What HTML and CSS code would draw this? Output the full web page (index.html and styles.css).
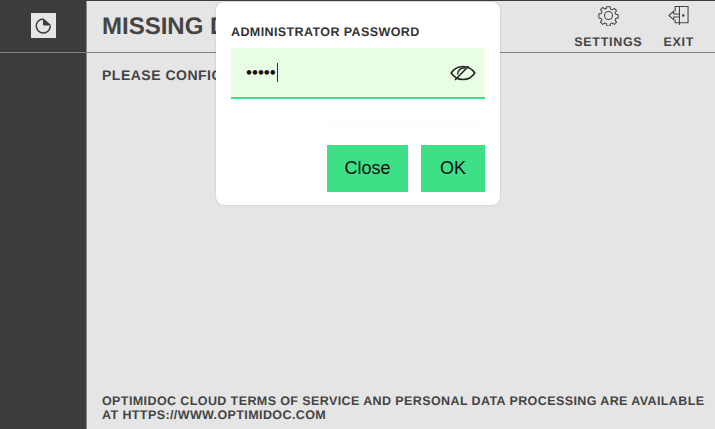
FILE: index.html
```html
<!DOCTYPE html>
<html lang="en">
<head>
  <meta charset="UTF-8" />
  <title>Optimidoc</title>
  <link rel="stylesheet" href="styles.css">
</head>
<body>
  <div class="app">
    <aside class="sidebar">
      <div class="logo-row">
        <div class="logo">
          <svg width="19" height="19" viewBox="0 0 19 19" fill="none" stroke="#3c3c3c" stroke-width="1.500">
            <path d="M9.300 3a7 7 0 1 0 7 7" />
            <path d="M9.500 3l7 6H9.500z" fill="#3c3c3c" stroke-width="1" />
          </svg>
        </div>
      </div>
    </aside>
    <main class="main">
      <header class="topbar">
        <h1>MISSING DATA</h1>
        <div class="actions">
          <div class="action action-settings">
            <svg width="21" height="21" viewBox="0 0 22 22" fill="none" stroke="#444" stroke-width="1.100">
              <circle cx="11" cy="11" r="4.200" />
              <path d="M9.300 1.800h3.400l.5 2.600 1.700.7 2.200-1.500 2.300 2.400-1.500 2.100.7 1.700 2.500.5v3.300l-2.500.5-.7 1.700 1.500 2.100-2.300 2.400-2.200-1.500-1.700.7-.5 2.600H9.300l-.5-2.600-1.700-.7-2.200 1.500-2.300-2.400 1.500-2.100-.7-1.700-2.500-.5V9.300l2.500-.5.7-1.700-1.500-2.100 2.300-2.400 2.200 1.500 1.700-.7z" stroke-linejoin="round" />
            </svg>
            <span>SETTINGS</span>
          </div>
          <div class="action action-exit">
            <svg width="21" height="21" viewBox="0 0 22 22" fill="none" stroke="#444" stroke-width="1.100">
              <path d="M7.500 6.500v-5H21v17h-9" />
              <path d="M7.500 15.500v3H12" />
              <path d="M12 1.500V21" />
              <circle cx="16" cy="11" r=".8" fill="#444" />
              <path d="M1 11l5-4.500v3h6v3H6v3z" />
            </svg>
            <span>EXIT</span>
          </div>
        </div>
      </header>
      <section class="content">
        <p class="message">PLEASE CONFIGURE THE APPLICATION</p>
        <p class="terms">OPTIMIDOC CLOUD TERMS OF SERVICE AND PERSONAL DATA PROCESSING ARE AVAILABLE AT HTTPS://WWW.OPTIMIDOC.COM</p>
      </section>
    </main>
  </div>

  <div class="dialog">
    <label class="dialog-label">ADMINISTRATOR PASSWORD</label>
    <div class="password-field">
      <span class="dots">•••••</span><span class="caret"></span>
      <svg class="eye" width="26" height="22" viewBox="0 0 26 22" fill="none" stroke="#222" stroke-width="1.500">
        <path d="M1.200 11C4 6.800 8 4.500 13 4.500S22 6.800 24.800 11C22 15.200 18 17.500 13 17.500S4 15.200 1.200 11z" />
        <path d="M7.500 12.500a6.500 6.500 0 0 1 7.500-6.500" />
        <path d="M5 18L18.500 4.200" />
      </svg>
    </div>
    <div class="hint"></div>
    <div class="buttons">
      <button class="btn btn-close" type="button">Close</button>
      <button class="btn btn-ok" type="button">OK</button>
    </div>
  </div>
</body>
</html>
```

FILE: styles.css
```css
html, body {
  margin: 0;
  height: 100%;
  overflow: hidden;
}
body {
  font-family: "Liberation Sans", Arial, sans-serif;
  background: #e5e5e5;
  color: #444;
  text-rendering: geometricPrecision;
}
.app {
  display: flex;
  height: 429px;
  box-sizing: border-box;
  border-top: 1px solid #3c3c3c;
}
.sidebar {
  width: 86px;
  background: #3c3c3c;
  border-right: 1px solid #8a8a8a;
}
.logo-row {
  height: 52px;
  box-sizing: border-box;
  padding-bottom: 3px;
  border-bottom: 1px solid #808080;
  display: flex;
  align-items: center;
  justify-content: center;
}
.logo {
  width: 25px;
  height: 25px;
  background: #e5e5e5;
  display: flex;
  align-items: center;
  justify-content: center;
}
.main {
  flex: 1;
  display: flex;
  flex-direction: column;
}
.topbar {
  height: 52px;
  box-sizing: border-box;
  border-bottom: 1px solid #808080;
  display: flex;
  align-items: center;
  justify-content: space-between;
  padding-left: 15px;
}
h1 {
  margin: 0;
  font-size: 24px;
  font-weight: bold;
}
.actions {
  display: flex;
  gap: 21px;
  padding-right: 21px;
}
.action {
  display: flex;
  flex-direction: column;
  align-items: center;
  gap: 9px;
  font-size: 12.500px;
  line-height: 14px;
  font-weight: bold;
  letter-spacing: 0.7px;
}
.action svg {
  display: block;
}
.content {
  flex: 1;
  display: flex;
  flex-direction: column;
  justify-content: space-between;
  padding: 14px 5px 7px 15px;
}
.message {
  margin: 0;
  font-size: 14px;
  font-weight: bold;
  letter-spacing: 0.5px;
}
.terms {
  margin: 0;
  font-size: 12.500px;
  font-weight: bold;
  line-height: 14px;
  letter-spacing: 0.4px;
}
.dialog {
  position: absolute;
  left: 216px;
  top: 2px;
  width: 284px;
  height: 203px;
  box-sizing: border-box;
  padding: 23px 15px 0;
  background: #fff;
  border-radius: 8px;
  box-shadow: 0 0 2px rgba(0, 0, 0, 0.2);
}
.dialog-label {
  display: block;
  font-size: 12.500px;
  font-weight: bold;
  line-height: 15px;
  color: #333;
  letter-spacing: 0.4px;
}
.password-field {
  margin-top: 8px;
  height: 51px;
  box-sizing: border-box;
  background: #e9fde4;
  border-bottom: 2px solid #3ddf87;
  display: flex;
  align-items: center;
  padding-left: 15px;
}
.dots {
  font-size: 17px;
  color: #111;
}
.caret {
  width: 1px;
  height: 19px;
  background: #333;
  margin-left: 1px;
}
.eye {
  margin-left: auto;
  margin-right: 9px;
}
.hint {
  margin: 24px 0 0 94px;
  height: 5px;
  background: #fcfffc;
}
.buttons {
  display: flex;
  justify-content: flex-end;
  gap: 13px;
  margin-top: 17px;
}
.btn {
  height: 47px;
  border: none;
  padding: 0;
  background: #3ddf87;
  color: #111;
  font-family: "Liberation Sans", Arial, sans-serif;
  font-size: 18px;
}
.btn-close {
  width: 81px;
}
.btn-ok {
  width: 64px;
}
```
